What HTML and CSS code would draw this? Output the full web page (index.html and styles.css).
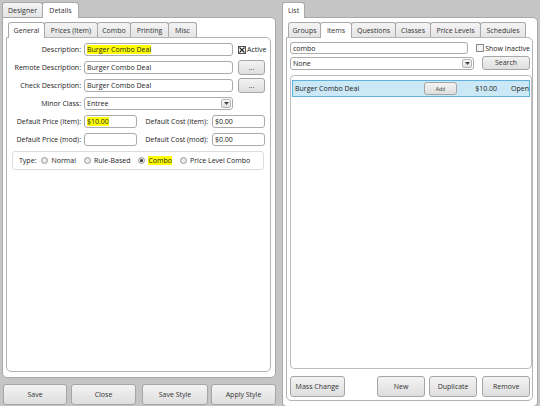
FILE: index.html
```html
<!DOCTYPE html>
<html>
<head>
<meta charset="utf-8">
<link rel="stylesheet" href="styles.css">
</head>
<body>
<div class="app">
  <div class="left">
    <div class="tabs outer-tabs">
      <div class="tab">Designer</div>
      <div class="tab active">Details</div>
    </div>
    <div class="panel left-panel">
      <div class="tabs inner-tabs">
        <div class="tab active t-general">General</div>
        <div class="tab t-prices">Prices (Item)</div>
        <div class="tab t-combo">Combo</div>
        <div class="tab t-printing">Printing</div>
        <div class="tab t-misc">Misc</div>
      </div>
      <div class="inner">
        <div class="row">
          <span class="lbl">Description:</span>
          <div class="input wide"><span class="hl">Burger Combo Deal</span></div>
          <label class="check active-check">
            <svg class="cbox" viewBox="0 0 8 8" width="8" height="8"><rect x="0.5" y="0.5" width="7" height="7" fill="#fff" stroke="#555"/><path d="M1.5 1.5 L6.5 6.5 M6.5 1.5 L1.5 6.5" stroke="#222" stroke-width="1.1"/></svg>
            <span>Active</span>
          </label>
        </div>
        <div class="row">
          <span class="lbl">Remote Description:</span>
          <div class="input wide">Burger Combo Deal</div>
          <div class="btn dots">...</div>
        </div>
        <div class="row">
          <span class="lbl">Check Description:</span>
          <div class="input wide">Burger Combo Deal</div>
          <div class="btn dots">...</div>
        </div>
        <div class="row">
          <span class="lbl">Minor Class:</span>
          <div class="input wide select">Entree<span class="arrow"><svg viewBox="0 0 5 3" width="5" height="3"><path d="M0 0 L5 0 L2.5 3 Z" fill="#444"/></svg></span></div>
        </div>
        <div class="row">
          <span class="lbl">Default Price (item):</span>
          <div class="input short"><span class="hl">$10.00</span></div>
          <span class="lbl2">Default Cost (item):</span>
          <div class="input short">$0.00</div>
        </div>
        <div class="row">
          <span class="lbl">Default Price (mod):</span>
          <div class="input short"></div>
          <span class="lbl2">Default Cost (mod):</span>
          <div class="input short">$0.00</div>
        </div>
        <div class="typebox">
          <span class="type-lbl">Type:</span>
          <span class="radio"><span class="rdot"></span>Normal</span>
          <span class="radio"><span class="rdot"></span>Rule-Based</span>
          <span class="radio"><span class="rdot on"></span><span class="hl">Combo</span></span>
          <span class="radio"><span class="rdot"></span>Price Level Combo</span>
        </div>
      </div>
    </div>
    <div class="bottom-btns">
      <div class="btn big b-save">Save</div>
      <div class="btn big b-close">Close</div>
      <div class="btn big b-savestyle">Save Style</div>
      <div class="btn big b-apply">Apply Style</div>
    </div>
  </div>
  <div class="right">
    <div class="tabs outer-tabs">
      <div class="tab active">List</div>
    </div>
    <div class="panel right-panel">
      <div class="tabs inner-tabs">
        <div class="tab t-groups">Groups</div>
        <div class="tab active t-items">Items</div>
        <div class="tab t-questions">Questions</div>
        <div class="tab t-classes">Classes</div>
        <div class="tab t-levels">Price Levels</div>
        <div class="tab t-sched">Schedules</div>
      </div>
      <div class="inner rinner">
        <div class="rrow r1">
          <div class="input search">combo</div>
          <label class="check show-inactive">
            <svg class="cbox" viewBox="0 0 8 8" width="8" height="8"><rect x="0.5" y="0.5" width="7" height="7" fill="#f4f4f4" stroke="#8a8a8a"/></svg>
            <span>Show Inactive</span>
          </label>
        </div>
        <div class="rrow r2">
          <div class="input search select">None<span class="arrow"><svg viewBox="0 0 5 3" width="5" height="3"><path d="M0 0 L5 0 L2.5 3 Z" fill="#444"/></svg></span></div>
          <div class="btn search-btn">Search</div>
        </div>
        <div class="listbox">
          <div class="item">
            <span class="item-name">Burger Combo Deal</span>
            <span class="btn add-btn">Add</span>
            <span class="item-price">$10.00</span>
            <span class="item-open">Open</span>
          </div>
        </div>
        <div class="rbtns">
          <div class="btn rb b-mass">Mass Change</div>
          <div class="spacer"></div>
          <div class="btn rb b-new">New</div>
          <div class="btn rb b-dup">Duplicate</div>
          <div class="btn rb b-remove">Remove</div>
        </div>
      </div>
    </div>
  </div>
</div>
</body>
</html>
```
FILE: styles.css
```css
* { box-sizing: border-box; }
html, body { margin: 0; padding: 0; }
body {
  width: 540px;
  height: 406px;
  background: #c5c5c5;
  font-family: "Open Sans", "Noto Sans", sans-serif;
  font-size: 7px;
  color: #222;
  overflow: hidden;
}
.app { display: flex; height: 406px; }
.left { width: 280px; display: flex; flex-direction: column; padding: 2px 2px 0 2px; }
.right { width: 260px; display: flex; flex-direction: column; padding: 2px 2px 2px 2px; margin-left: 2px; }

.tabs { display: flex; align-items: flex-end; }
.tab {
  height: 15px;
  display: flex; align-items: center; justify-content: center;
  border: 1px solid #a9a9a9;
  border-bottom: none;
  border-radius: 3px 3px 0 0;
  background: linear-gradient(#f4f4f4, #e4e4e4);
  color: #333;
  margin-right: -1px;
  position: relative;
}
.tab.active { background: #fff; z-index: 2; height: 16px; margin-bottom: -1px; }
.outer-tabs .tab { padding: 0 6px; }
.outer-tabs .tab:first-child { width: 41px; }
.left .outer-tabs .tab.active { width: 37px; }
.right .outer-tabs .tab.active { width: 23px; }

.panel {
  background: #fff;
  border: 1px solid #a9a9a9;
  border-radius: 0 5px 5px 5px;
  padding: 4px 4px 5px 3px;
  display: flex; flex-direction: column;
}
.left-panel { height: 361px; }
.right-panel { flex: 1; }

.inner-tabs { padding-left: 2px; }
.inner {
  flex: 1;
  border: 1px solid #b4b4b4;
  border-radius: 0 5px 5px 5px;
  background: #fff;
  padding-top: 5px;
}
.t-general { width: 37px; }
.t-prices { width: 54px; }
.t-combo { width: 34px; }
.t-printing { width: 39px; }
.t-misc { width: 29px; }
.t-groups { width: 33px; }
.t-items { width: 32px; }
.t-questions { width: 45px; }
.t-classes { width: 36px; }
.t-levels { width: 51px; }
.t-sched { width: 46px; }

.row { display: flex; align-items: center; height: 13px; margin-bottom: 5px; }
.lbl { width: 74px; text-align: right; margin-right: 3px; white-space: nowrap; }
.lbl2 { width: 71px; text-align: right; margin-right: 4px; white-space: nowrap; }
.input {
  height: 13px;
  border: 1px solid #ababab;
  border-radius: 3px;
  background: #fff;
  padding: 0 2px;
  display: flex; align-items: center;
  white-space: nowrap;
  position: relative;
}
.wide { width: 149px; }
.short { width: 53px; }
.hl { background: #ffff00; }
.select .arrow {
  position: absolute; right: 1px; top: 1px;
  width: 10px; height: 9px;
  border: 1px solid #b5b5b5; border-radius: 2px;
  background: linear-gradient(#f6f6f6, #e2e2e2);
  display: flex; align-items: center; justify-content: center;
}
.check { display: flex; align-items: center; white-space: nowrap; }
.cbox { margin-right: 1px; }
.active-check { margin-left: 5px; }

.btn {
  border: 1px solid #a6a6a6;
  border-radius: 3px;
  background: linear-gradient(#f3f3f3, #dedede);
  display: flex; align-items: center; justify-content: center;
  color: #333;
  white-space: nowrap;
}
.dots { width: 27px; height: 15px; margin-left: 5px; }

.typebox {
  margin: 4px 6px 0 5px;
  height: 19px;
  border: 1px solid #dcdcdc;
  border-radius: 3px;
  display: flex; align-items: center;
  padding-left: 6px;
}
.type-lbl { margin-right: 5px; }
.radio { display: flex; align-items: center; margin-right: 8px; }
.rdot {
  width: 7px; height: 7px; border-radius: 50%;
  border: 1px solid #9a9a9a;
  background: radial-gradient(#f4f4f4, #d8d8d8);
  margin-right: 3px;
  position: relative;
}
.rdot.on::after {
  content: ""; position: absolute; left: 1px; top: 1px;
  width: 3px; height: 3px; border-radius: 50%; background: #333;
}

.bottom-btns { display: flex; margin-top: 6px; }
.big { height: 21px; }
.b-save { width: 64px; margin-left: 1px; }
.b-close { width: 65px; margin-left: 4px; }
.b-savestyle { width: 66px; margin-left: 6px; }
.b-apply { width: 65px; margin-left: 3px; }

.rinner { display: flex; flex-direction: column; padding: 4px 2px 3px 3px; }
.rrow { display: flex; align-items: center; }
.search { width: 184px; height: 12px; }
.r1 { height: 12px; }
.show-inactive { margin-left: 8px; }
.r2 { margin-top: 2px; height: 14px; }
.r2 .search { height: 13px; }
.search-btn { width: 48px; height: 14px; margin-left: 8px; margin-top: -1px; }
.listbox {
  margin-top: 5px;
  height: 294px;
  width: 242px;
  border: 1px solid #bdbdbd;
  border-radius: 4px;
  padding: 4px 1px;
}
.item {
  height: 17px;
  background: #cbe8f6;
  border: 1px solid #5eb0dd;
  display: flex; align-items: center;
  padding-left: 2px;
}
.item-name { width: 129px; }
.add-btn { width: 33px; height: 13px; font-size: 5px; }
.item-price { width: 40px; text-align: right; }
.item-open { width: 32px; text-align: right; }
.rbtns { display: flex; margin-top: 7px; }
.rb { height: 21px; }
.spacer { width: 33px; }
.b-mass { width: 55px; }
.b-new { width: 48px; }
.b-dup { width: 49px; margin-left: 4px; }
.b-remove { width: 48px; margin-left: 5px; }
```
